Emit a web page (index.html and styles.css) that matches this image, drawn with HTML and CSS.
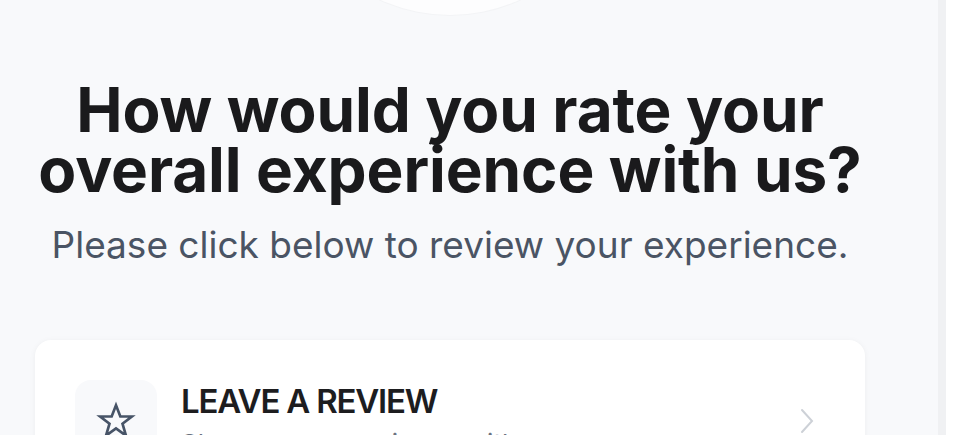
FILE: index.html
```html
<!DOCTYPE html>
<html lang="en">
<head>
<meta charset="utf-8">
<title>Rate your experience</title>
<link rel="stylesheet" href="styles.css">
</head>
<body>
<div class="page">
  <main class="main">
    <div class="logo"></div>
    <h1 class="title">How would you rate your overall experience with us?</h1>
    <p class="lead">Please click below to review your experience.</p>
    <a class="card" href="#">
      <span class="icon-box">
        <svg width="40" height="40" viewBox="0 0 24 24" fill="none" stroke="#475467" stroke-width="1.6" stroke-linejoin="miter"><polygon points="12,2.5 14.6,9.3 21.5,9.3 15.9,13.6 18,20.8 12,16.5 6,20.8 8.1,13.6 2.5,9.3 9.4,9.3"/></svg>
      </span>
      <span class="card-text">
        <span class="card-title">LEAVE A REVIEW</span>
        <span class="card-sub">Share your experience with us</span>
      </span>
      <svg class="chevron" width="16" height="26" viewBox="0 0 16 26" fill="none" stroke="#cdd1d7" stroke-width="2" stroke-linecap="round"><polyline points="3,2 13,13 3,24"/></svg>
    </a>
  </main>
  <div class="rail"></div>
</div>
</body>
</html>
```
FILE: styles.css
```css
* { box-sizing: border-box; }
html, body { margin: 0; padding: 0; }
body {
  background: #ffffff;
  font-family: "Inter", "Liberation Sans", sans-serif;
  overflow: hidden;
  height: 435px;
}
.page {
  display: flex;
  height: 435px;
  width: 946px;
}
.main {
  width: 938px;
  background: #f8f9fb;
  padding: 0 0 0 35px;
  display: flex;
  flex-direction: column;
  overflow: hidden;
}
.rail {
  width: 8px;
  background: #f0f1f3;
}
.logo {
  width: 334px;
  height: 334px;
  border-radius: 50%;
  background: #fdfdfe;
  box-shadow: 0 0 0 1px #f3f4f6;
  margin: -319px 0 0 248px;
  flex: none;
}
.title {
  width: 830px;
  margin: 65px 0 0 0;
  text-align: center;
  font-size: 62px;
  line-height: 60px;
  font-weight: 700;
  color: #1a1a1c;
  letter-spacing: -0.1px;
}
.lead {
  width: 830px;
  margin: 23px 0 0 0;
  text-align: center;
  font-size: 37px;
  line-height: 44px;
  color: #4a5464;
  letter-spacing: 0;
}
.card {
  width: 830px;
  margin-top: 73px;
  background: #ffffff;
  border-radius: 16px;
  box-shadow: 0 1px 6px rgba(16, 24, 40, 0.05);
  padding: 40px 40px 40px 40px;
  display: flex;
  align-items: flex-start;
  text-decoration: none;
  flex: none;
}
.icon-box {
  width: 82px;
  height: 82px;
  border-radius: 16px;
  background: #f8f9fb;
  display: flex;
  align-items: center;
  justify-content: center;
  flex: none;
}
.card-text {
  display: flex;
  flex-direction: column;
  margin-left: 24px;
  margin-top: 1px;
  flex: 1;
}
.card-title {
  font-size: 33px;
  line-height: 40px;
  font-weight: 600;
  color: #1d1d1f;
  letter-spacing: -1.2px;
}
.card-sub {
  font-size: 26px;
  line-height: 36px;
  color: #6b7280;
  margin-top: 5px;
}
.chevron {
  margin-top: 28px;
  margin-right: 10px;
  flex: none;
}
```
